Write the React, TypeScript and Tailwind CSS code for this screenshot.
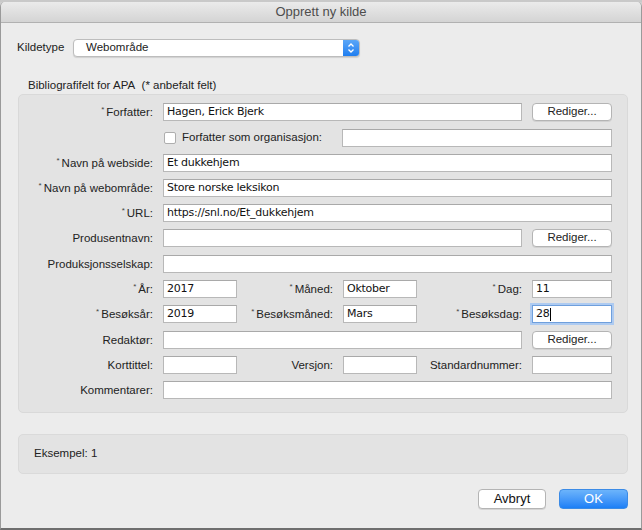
import React from "react";

const LBL = "font-['Liberation_Sans',Arial,sans-serif] text-[11.5px] text-[#222]";
const INP = "font-['DejaVu_Sans',Verdana,sans-serif] text-[11px] tracking-[-0.25px] text-[#111]";

function Label({ children, req, className }: { children: React.ReactNode; req?: boolean; className: string }) {
  return (
    <div className={`flex shrink-0 items-center justify-end h-[18px] ${LBL} ${className}`}>
      {req && <span className="text-[8px] leading-[8px] self-start mt-[3px] mr-[2px] text-[#444]">*</span>}
      <span className="leading-[18px]">{children}</span>
    </div>
  );
}

function Field({ value, className }: { value?: string; className: string }) {
  return (
    <div
      className={`h-[18px] shrink-0 bg-white border border-[#b8b8b8] border-t-[#a9a9a9] flex items-center pl-[3px] ${INP} ${className}`}
    >
      {value}
    </div>
  );
}

function Btn({ children }: { children: React.ReactNode }) {
  return (
    <div
      className={`w-[80px] h-[18px] ml-[10px] shrink-0 bg-white border border-[#b4b4b4] rounded-[4px] shadow-[0_1px_0_rgba(0,0,0,0.08)] flex items-center justify-center ${LBL} text-[#111]`}
    >
      {children}
    </div>
  );
}

export default function App() {
  return (
    <div className="w-[642px] h-[530px] bg-[#cfcfcf] overflow-hidden">
      <div className="h-[2px] bg-[#c9c9c9]" />
      <div className="h-[528px] flex flex-col border-l border-r border-b-2 border-[#9a9a9a] border-b-[#6e6e6e] rounded-t-[5px] bg-[#ececec] overflow-hidden">
        {/* title bar */}
        <div className="h-[21px] shrink-0 bg-gradient-to-b from-[#ebebeb] to-[#d4d4d4] border-b border-[#b1b1b1] flex items-center justify-center font-['Liberation_Sans',Arial,sans-serif] text-[13px] text-[#4d4d4d]">
          Opprett ny kilde
        </div>

        <div className="flex flex-col pt-[16px] pl-[16px] pr-[14px]">
          {/* Kildetype */}
          <div className="flex items-center h-[18px]">
            <div className={`${LBL} w-[56px]`}>Kildetype</div>
            <div className="w-[287px] h-[18px] bg-white border border-[#bdbdbd] rounded-[4px] shadow-[0_1px_1px_rgba(0,0,0,0.12)] flex items-center overflow-hidden">
              <span className={`${LBL} text-[#111] pl-[12px] flex-1`}>Webområde</span>
              <div className="w-[16px] h-full bg-gradient-to-b from-[#5aa6f7] to-[#1e7ef0] flex items-center justify-center">
                <svg width="8" height="12" viewBox="0 0 8 12">
                  <path d="M1.5 4.5 L4 2 L6.5 4.5" stroke="white" strokeWidth="1.3" fill="none" />
                  <path d="M1.5 7.5 L4 10 L6.5 7.5" stroke="white" strokeWidth="1.3" fill="none" />
                </svg>
              </div>
            </div>
          </div>

          <div className={`${LBL} mt-[21px] pl-[11px] h-[14px] leading-[14px]`}>Bibliografifelt for APA&nbsp; (* anbefalt felt)</div>

          {/* group box */}
          <div className="mt-[2px] ml-[1px] w-[610px] bg-[#e3e3e3] border border-[#d9d9d9] rounded-[5px] pt-[8px] pb-[13px] flex flex-col gap-[7px]">
            <div className="flex items-center">
              <Label req className="w-[134px]">Forfatter:</Label>
              <Field value="Hagen, Erick Bjerk" className="ml-[10px] w-[359px]" />
              <Btn>Rediger...</Btn>
            </div>
            <div className="flex items-center mt-[1px]">
              <div className="w-[134px]" />
              <div className="ml-[11px] w-[12px] h-[12px] bg-white border border-[#aeaeae] rounded-[2px]" />
              <span className={`${LBL} ml-[6px] w-[160px]`}>Forfatter som organisasjon:</span>
              <Field className="ml-[0px] w-[270px]" />
            </div>
            <div className="flex items-center">
              <Label req className="w-[134px]">Navn på webside:</Label>
              <Field value="Et dukkehjem" className="ml-[10px] w-[449px]" />
            </div>
            <div className="flex items-center">
              <Label req className="w-[134px]">Navn på webområde:</Label>
              <Field value="Store norske leksikon" className="ml-[10px] w-[449px]" />
            </div>
            <div className="flex items-center">
              <Label req className="w-[134px]">URL:</Label>
              <Field value="https://snl.no/Et_dukkehjem" className="ml-[10px] w-[449px]" />
            </div>
            <div className="flex items-center">
              <Label className="w-[134px]">Produsentnavn:</Label>
              <Field className="ml-[10px] w-[359px]" />
              <Btn>Rediger...</Btn>
            </div>
            <div className="flex items-center mt-[1px]">
              <Label className="w-[134px]">Produksjonsselskap:</Label>
              <Field className="ml-[10px] w-[449px]" />
            </div>
            <div className="flex items-center">
              <Label req className="w-[134px]">År:</Label>
              <Field value="2017" className="ml-[10px] w-[74px]" />
              <Label req className="w-[96px]">Måned:</Label>
              <Field value="Oktober" className="ml-[10px] w-[74px]" />
              <Label req className="w-[105px]">Dag:</Label>
              <Field value="11" className="ml-[10px] w-[80px]" />
            </div>
            <div className="flex items-center">
              <Label req className="w-[134px]">Besøksår:</Label>
              <Field value="2019" className="ml-[10px] w-[74px]" />
              <Label req className="w-[96px]">Besøksmåned:</Label>
              <Field value="Mars" className="ml-[10px] w-[74px]" />
              <Label req className="w-[105px]">Besøksdag:</Label>
              <div
                className={`ml-[10px] w-[80px] h-[18px] bg-white border border-[#6f9fdc] shadow-[0_0_0_2px_#aecbf1] flex items-center pl-[3px] ${INP}`}
              >
                28<span className="w-[1px] h-[13px] bg-black" />
              </div>
            </div>
            <div className="flex items-center mt-[1px]">
              <Label className="w-[134px]">Redaktør:</Label>
              <Field className="ml-[10px] w-[359px]" />
              <Btn>Rediger...</Btn>
            </div>
            <div className="flex items-center">
              <Label className="w-[134px]">Korttittel:</Label>
              <Field className="ml-[10px] w-[74px]" />
              <Label className="w-[96px]">Versjon:</Label>
              <Field className="ml-[10px] w-[74px]" />
              <Label className="w-[105px]">Standardnummer:</Label>
              <Field className="ml-[10px] w-[80px]" />
            </div>
            <div className="flex items-center">
              <Label className="w-[134px]">Kommentarer:</Label>
              <Field className="ml-[10px] w-[449px]" />
            </div>
          </div>

          {/* Eksempel */}
          <div className={`mt-[21px] ml-[1px] w-[610px] h-[40px] bg-[#e3e3e3] border border-[#dadada] rounded-[5px] flex items-center pl-[15px] ${LBL}`}>
            Eksempel: 1
          </div>

          {/* buttons */}
          <div className="mt-[15px] flex justify-end gap-[13px] w-[611px]">
            <div className="w-[68px] h-[20px] bg-white border border-[#b4b4b4] rounded-[4px] shadow-[0_1px_0_rgba(0,0,0,0.1)] flex items-center justify-center font-['Liberation_Sans',Arial,sans-serif] text-[13px] text-[#111]">
              Avbryt
            </div>
            <div className="w-[69px] h-[20px] bg-gradient-to-b from-[#6cb4fb] to-[#1b7ff6] border border-[#3b8be6] rounded-[4px] flex items-center justify-center font-['Liberation_Sans',Arial,sans-serif] text-[13px] text-white">
              OK
            </div>
          </div>
        </div>
      </div>
    </div>
  );
}
